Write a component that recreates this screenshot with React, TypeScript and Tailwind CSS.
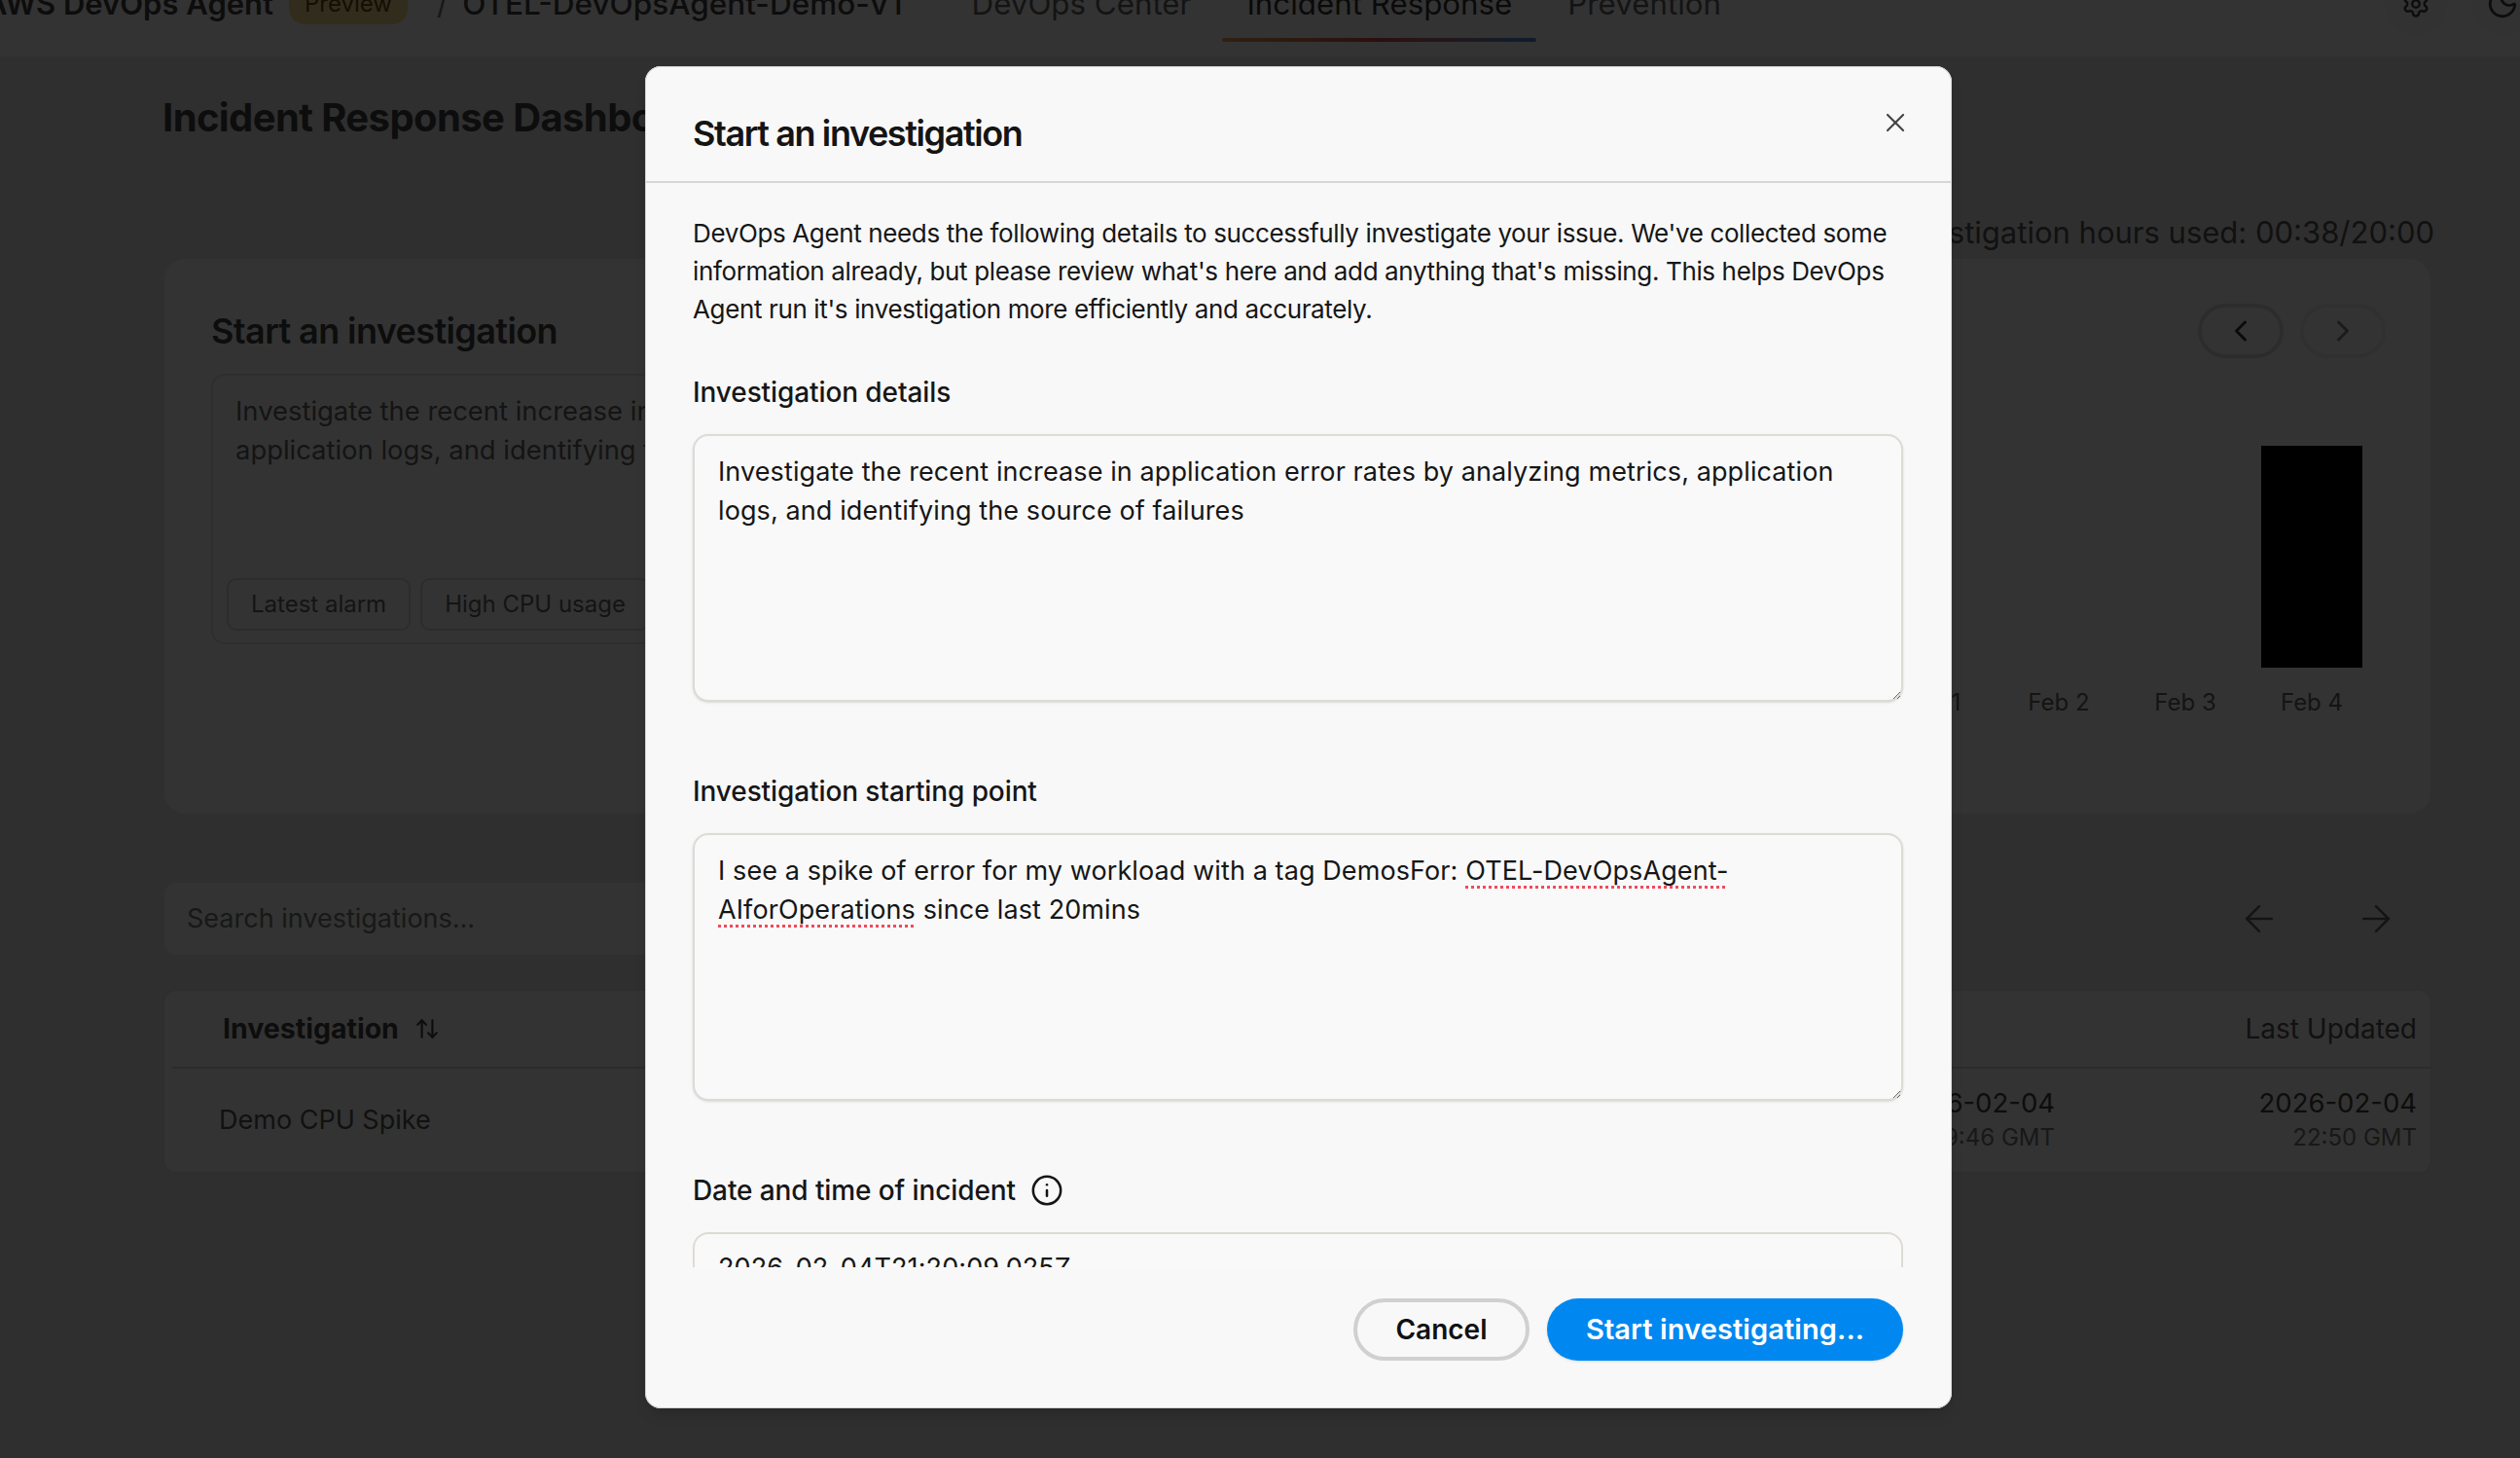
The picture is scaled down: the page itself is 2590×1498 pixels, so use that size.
import { ArrowLeft, ArrowRight, ArrowUpDown, ChevronLeft, ChevronRight, Info, Moon, Settings, X } from 'lucide-react'

function Chip({ label }: { label: string }) {
  return (
    <div className="flex h-[54px] items-center rounded-[10px] border-2 border-[#dcdcdc] px-[23px] text-[24px] text-[#666]">
      {label}
    </div>
  )
}

function FieldLabel({ children }: { children: React.ReactNode }) {
  return <div className="text-[28px] font-medium leading-[38px] tracking-[-0.1px] text-[#161616]">{children}</div>
}

export default function App() {
  const days = ['Feb 1', 'Feb 2', 'Feb 3', 'Feb 4']

  return (
    <div className="relative h-[1498px] w-full overflow-hidden bg-[#ececec] font-['Inter',sans-serif]">
      <header className="-mt-[50px] flex h-[108px] items-center bg-white">
        <span className="-ml-[15px] text-[31px] font-semibold text-[#444]">AWS DevOps Agent</span>
        <span className="ml-[16px] rounded-[16px] bg-[#f6d98a] px-[16px] py-[3px] text-[24px] text-[#5a4a10]">Preview</span>
        <span className="ml-[30px] text-[31px] text-[#777]">/</span>
        <span className="ml-[15px] text-[31.5px] font-medium text-[#444]">OTEL-DevOpsAgent-Demo-V1</span>
        <nav className="ml-[71px] flex items-center gap-[57px] text-[31.3px] text-[#666]">
          <span>DevOps Center</span>
          <span className="relative text-[#333]">
            Incident Response
            <span className="absolute -bottom-[16px] -left-[25px] -right-[25px] h-[4px] rounded-full bg-gradient-to-r from-[#e6a04a] via-[#d8484a] to-[#3a8fe0]" />
          </span>
          <span>Prevention</span>
        </nav>
        <div className="-mr-[14px] ml-auto flex items-center gap-[25px] text-[#444]">
          <div className="flex h-[64px] w-[64px] items-center justify-center rounded-full bg-[#fafafa]">
            <Settings className="h-[30px] w-[30px]" />
          </div>
          <div className="flex h-[64px] w-[64px] items-center justify-center rounded-full bg-[#fafafa]">
            <Moon className="h-[34px] w-[34px]" />
          </div>
        </div>
      </header>

      <main className="pl-[167px] pr-[90px]">
        <h1 className="pb-[34px] pt-[38px] text-[40px] font-bold leading-[50px] tracking-[-0.6px] text-[#444]">
          Incident Response Dashboard
        </h1>
        <div className="border-t-2 border-[#e4e4e4]" />
        <div className="-mr-[2px] mt-[37px] text-right text-[31px] leading-[40px] text-[#555]">Investigation hours used: 00:38/20:00</div>

        <section className="mt-[5px] flex h-[574px] justify-between rounded-[24px] border-2 border-[#e8e8e8] bg-white pl-[48px] pr-[46px]">
          <div className="w-[1300px] pt-[50px]">
            <h2 className="text-[36px] font-semibold leading-[48px] tracking-[-0.6px] text-[#444]">Start an investigation</h2>
            <div className="mt-[20px] flex h-[278px] flex-col justify-between rounded-[14px] border-2 border-[#e4e4e4] pb-[12px] pl-[14px] pt-[16px]">
              <p className="pl-[9px] text-[27.4px] leading-[40px] text-[#666]">
                Investigate the recent increase in application error rates by analyzing metrics,
                <br />
                application logs, and identifying the source of failures
              </p>
              <div className="flex gap-[10px]">
                <Chip label="Latest alarm" />
                <Chip label="High CPU usage" />
              </div>
            </div>
          </div>
          <div className="flex flex-col items-end pt-[46px]">
            <div className="flex gap-[17px]">
              <button className="flex h-[56px] w-[88px] items-center justify-center rounded-full border-4 border-[#ddd] text-[#333]">
                <ChevronLeft className="h-[36px] w-[36px]" />
              </button>
              <button className="flex h-[56px] w-[88px] items-center justify-center rounded-full border-4 border-[#eee] text-[#888]">
                <ChevronRight className="h-[36px] w-[36px]" />
              </button>
            </div>
            <div className="mr-[11px] mt-[90px] flex items-end">
              {days.map((d) => (
                <div key={d} className="flex w-[130px] flex-col items-center">
                  {d === 'Feb 4' && <div className="h-[228px] w-[104px] bg-black" />}
                  <div className="mt-[20px] text-[24px] leading-[32px] text-[#666]">{d}</div>
                </div>
              ))}
            </div>
          </div>
        </section>

        <div className="mt-[67px] flex items-center justify-between">
          <div className="flex h-[78px] w-[1300px] items-center rounded-[14px] border-2 border-[#e8e8e8] bg-white px-[23px] text-[27px] text-[#777]">
            Search investigations...
          </div>
          <div className="mr-[36px] flex gap-[76px] text-[#666]">
            <ArrowLeft className="h-[44px] w-[44px]" strokeWidth={1.4} />
            <ArrowRight className="h-[44px] w-[44px]" strokeWidth={1.4} />
          </div>
        </div>

        <div className="mt-[33px] h-[190px] rounded-[14px] border-2 border-[#e4e4e4] bg-white">
          <div className="ml-[8px] flex h-[80px] items-center border-b-2 border-[#dcdcdc] pr-[14px] text-[28px] text-[#444]">
            <div className="flex flex-1 items-center gap-[16px] pl-[52px] text-[28.5px] font-bold">
              Investigation <ArrowUpDown className="h-[26px] w-[26px]" />
            </div>
            <div className="flex w-[400px] items-center gap-[16px] pl-[100px] font-bold">
              Started <ArrowUpDown className="h-[26px] w-[26px]" />
            </div>
            <div className="w-[372px] text-right font-normal text-[#555]">Last Updated</div>
          </div>
          <div className="ml-[8px] flex h-[106px] items-center pr-[14px] text-[27.5px] text-[#444]">
            <div className="flex-1 pl-[48px] text-[27px] text-[#555]">Demo CPU Spike</div>
            <div className="text-right leading-[34px]">
              2026-02-04
              <div className="mt-[2px] text-[24px] text-[#777]">19:46 GMT</div>
            </div>
            <div className="w-[372px] text-right leading-[34px]">
              2026-02-04
              <div className="mt-[2px] text-[24px] text-[#777]">22:50 GMT</div>
            </div>
          </div>
        </div>
      </main>

      {/* dimmed backdrop + modal */}
      <div className="absolute inset-0 bg-black/80" />
      <div className="absolute left-[663px] top-[68px] flex h-[1379px] w-[1343px] flex-col overflow-hidden rounded-[16px] bg-[#f8f8f8] shadow-lg ring-1 ring-inset ring-[#d4d4d4]">
        <div className="flex h-[120px] shrink-0 items-start justify-between border-b-2 border-[#d6d6d6] pl-[49px] pr-[42px] pt-[46px]">
          <h2 className="text-[36px] font-semibold leading-[46px] tracking-[-1.4px] text-[#141414]">Start an investigation</h2>
          <X className="-mt-[4px] h-[32px] w-[32px] text-[#444]" strokeWidth={1.6} />
        </div>

        <div className="min-h-0 flex-1 overflow-hidden pl-[49px] pr-[50px] pt-[32px]">
          <p className="text-[26px] leading-[39px] tracking-[-0.37px] text-[#161616]">
            DevOps Agent needs the following details to successfully investigate your issue. We've collected some information already, but please review what's here and add anything that's missing. This helps DevOps Agent run it's investigation more efficiently and accurately.
          </p>
          <div className="mt-[47px]"><FieldLabel>Investigation details</FieldLabel></div>
          <div className="mt-[24px] h-[275px] resize-y overflow-auto rounded-[16px] border-2 border-[#dedad6] bg-[#f9f9f9] px-[24px] py-[17px] text-[27px] leading-[40px] tracking-[0.1px] text-[#161616] shadow-sm">
            Investigate the recent increase in application error rates by analyzing metrics, application logs, and identifying the source of failures
          </div>
          <div className="mt-[73px]"><FieldLabel>Investigation starting point</FieldLabel></div>
          <div className="mt-[24px] h-[275px] resize-y overflow-auto rounded-[16px] border-2 border-[#dedad6] bg-[#f9f9f9] px-[24px] py-[17px] text-[27px] leading-[40px] tracking-[0.1px] text-[#161616] shadow-sm">
            I see a spike of error for my workload with a tag DemosFor:{' '}
            <span className="underline decoration-[#ef4b5c] decoration-dotted decoration-[3px] underline-offset-[6px]">OTEL-DevOpsAgent-AIforOperations</span>{' '}
            since last 20mins
          </div>
          <div className="mt-[73px] flex items-center gap-[15px]">
            <FieldLabel>Date and time of incident</FieldLabel>
            <Info className="h-[34px] w-[34px] text-[#161616]" strokeWidth={1.8} />
          </div>
          <div className="mt-[24px] h-[70px] rounded-[16px] border-2 border-[#dedad6] bg-[#f9f9f9] px-[24px] py-[15px] text-[27px] leading-[40px] tracking-[0.1px] text-[#161616]">
            2026-02-04T21:20:09.025Z
          </div>
        </div>

        <div className="flex h-[145px] shrink-0 justify-end gap-[18px] pl-[49px] pr-[50px] pt-[32px]">
          <button className="h-[64px] w-[181px] rounded-full border-4 border-[#d0d0d0] text-[28px] font-semibold text-[#111]">Cancel</button>
          <button className="h-[64px] w-[366px] rounded-full bg-[#0088f0] text-[29px] font-semibold tracking-[0.1px] text-white shadow-sm">Start investigating...</button>
        </div>
      </div>
    </div>
  )
}
